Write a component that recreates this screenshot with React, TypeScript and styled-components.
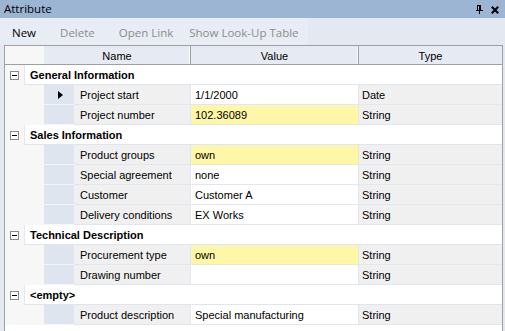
import React from "react";
import styled, { createGlobalStyle } from "styled-components";

const Global = createGlobalStyle`
  html, body { margin: 0; padding: 0; }
  body {
    width: 505px;
    height: 331px;
    overflow: hidden;
    background: #e3e8f1;
    font-family: "Liberation Sans", Arial, sans-serif;
  }
`;

const Panel = styled.div`
  width: 505px;
  height: 331px;
  display: flex;
  flex-direction: column;
  overflow: hidden;
  background: #e3e8f1;
`;

const TitleBar = styled.div`
  height: 18px;
  flex: none;
  display: flex;
  align-items: center;
  background: #9bb5d3;
  padding: 0 6px 0 4px;
  font-family: "Open Sans", "Noto Sans", sans-serif;
  font-size: 11.5px;
  color: #000;
`;

const Title = styled.span`
  flex: 1;
  line-height: 18px;
`;

const TitleIcons = styled.div`
  display: flex;
  align-items: center;
  gap: 8px;
  padding-top: 1px;
`;

const Toolbar = styled.div`
  height: 27px;
  flex: none;
  display: flex;
  align-items: stretch;
`;

const ToolStrip = styled.div`
  width: 308px;
  display: flex;
  align-items: center;
  background: #e8ecf4;
  padding-left: 12px;
  box-sizing: border-box;
`;

const ToolButton = styled.span<{ $disabled?: boolean; $gap?: number }>`
  font-family: "Open Sans", "Noto Sans", sans-serif;
  font-size: 11.5px;
  color: ${(p) => (p.$disabled ? "#8c8c8c" : "#000")};
  margin-left: ${(p) => p.$gap ?? 0}px;
  white-space: nowrap;
  padding-top: 2px;
`;

const Grid = styled.div`
  flex: 1;
  margin: 0 2px 0 4px;
  border: 1px solid #a0a0a0;
  border-bottom: none;
  background: #f7f7f7;
  font-size: 11px;
  color: #000;
  display: flex;
  flex-direction: column;
`;

const HeaderRow = styled.div`
  height: 18px;
  display: flex;
  border-bottom: 1px solid #a0a0a0;
  flex: none;
`;

const HeaderGutter = styled.div`
  width: 39px;
  flex: none;
  background: #f7f7f7;
`;

const HeaderCell = styled.div<{ $w: number; $last?: boolean }>`
  width: ${(p) => p.$w}px;
  flex: ${(p) => (p.$last ? 1 : "none")};
  box-sizing: border-box;
  background: #e6ebf3;
  display: flex;
  align-items: center;
  justify-content: center;
  border-right: ${(p) => (p.$last ? "none" : "1px solid #a0a0a0")};
  box-shadow: ${(p) => (p.$last ? "none" : "inset -1px 0 0 #f6f8fb")};
  line-height: 18px;
  padding-top: 1px;
`;

const GroupRow = styled.div`
  height: 20px;
  display: flex;
  flex: none;
`;

const GroupGutter = styled.div`
  width: 19px;
  flex: none;
  display: flex;
  align-items: center;
  padding-left: 5px;
  box-sizing: border-box;
`;

const MinusBox = styled.div`
  width: 9px;
  height: 9px;
  box-sizing: border-box;
  border: 1px solid #8a8a8a;
  background: #fff;
  display: flex;
  align-items: center;
  justify-content: center;
  &::after {
    content: "";
    width: 5px;
    height: 1px;
    background: #000;
  }
`;

const GroupBand = styled.div`
  flex: 1;
  background: #fff;
  border-left: 1px solid #e3e8f0;
  border-bottom: 1px solid #dfe5ee;
  display: flex;
  align-items: center;
  padding-left: 5px;
  font-weight: bold;
`;

const DataRow = styled.div`
  height: 20px;
  display: flex;
  flex: none;
`;

const RowGutter = styled.div`
  width: 39px;
  flex: none;
`;

const RowHeader = styled.div`
  width: 30px;
  flex: none;
  box-sizing: border-box;
  background: #dfe5ee;
  border-bottom: 1px solid #f4f6f9;
  display: flex;
  align-items: center;
  justify-content: center;
`;

const Arrow = styled.div`
  width: 0;
  height: 0;
  border-top: 4px solid transparent;
  border-bottom: 4px solid transparent;
  border-left: 5px solid #000;
  margin-left: 2px;
`;

const Cell = styled.div<{ $w?: number; $bg: string; $pad: number; $last?: boolean }>`
  width: ${(p) => (p.$w ? `${p.$w}px` : "auto")};
  flex: ${(p) => (p.$last ? 1 : "none")};
  box-sizing: border-box;
  background: ${(p) => p.$bg};
  border-right: ${(p) => (p.$last ? "none" : "1px solid #e1e7ef")};
  border-bottom: 1px solid #e1e7ef;
  padding-left: ${(p) => p.$pad}px;
  display: flex;
  align-items: center;
  white-space: nowrap;
  overflow: hidden;
`;

const Filler = styled.div`
  flex: 1;
  background: #fff;
`;

type Row = { name: string; value: string; type: string; highlight?: boolean; current?: boolean };
type Group = { title: string; rows: Row[] };

const groups: Group[] = [
  {
    title: "General Information",
    rows: [
      { name: "Project start", value: "1/1/2000", type: "Date", current: true },
      { name: "Project number", value: "102.36089", type: "String", highlight: true },
    ],
  },
  {
    title: "Sales Information",
    rows: [
      { name: "Product groups", value: "own", type: "String", highlight: true },
      { name: "Special agreement", value: "none", type: "String" },
      { name: "Customer", value: "Customer A", type: "String" },
      { name: "Delivery conditions", value: "EX Works", type: "String" },
    ],
  },
  {
    title: "Technical Description",
    rows: [
      { name: "Procurement type", value: "own", type: "String", highlight: true },
      { name: "Drawing number", value: "", type: "String" },
    ],
  },
  {
    title: "<empty>",
    rows: [{ name: "Product description", value: "Special manufacturing", type: "String" }],
  },
];

const PinIcon = () => (
  <svg width="7" height="9" viewBox="0 0 7 9" shapeRendering="crispEdges">
    <rect x="1.5" y="0.5" width="3" height="5" fill="none" stroke="#000" />
    <rect x="3" y="0" width="2" height="6" fill="#000" />
    <rect x="0" y="5" width="7" height="1" fill="#000" />
    <rect x="3" y="6" width="1" height="3" fill="#000" />
  </svg>
);

const CloseIcon = () => (
  <svg width="8" height="8" viewBox="0 0 8 8">
    <path d="M0.8 0.8 L7.2 7.2 M7.2 0.8 L0.8 7.2" stroke="#000" strokeWidth="2" />
  </svg>
);

export default function App() {
  return (
    <>
      <Global />
      <Panel>
        <TitleBar>
          <Title>Attribute</Title>
          <TitleIcons>
            <PinIcon />
            <CloseIcon />
          </TitleIcons>
        </TitleBar>
        <Toolbar>
          <ToolStrip>
            <ToolButton>New</ToolButton>
            <ToolButton $disabled $gap={24}>Delete</ToolButton>
            <ToolButton $disabled $gap={24}>Open Link</ToolButton>
            <ToolButton $disabled $gap={16}>Show Look-Up Table</ToolButton>
          </ToolStrip>
        </Toolbar>
        <Grid>
          <HeaderRow>
            <HeaderGutter />
            <HeaderCell $w={147}>Name</HeaderCell>
            <HeaderCell $w={168}>Value</HeaderCell>
            <HeaderCell $w={143} $last>Type</HeaderCell>
          </HeaderRow>
          {groups.map((g) => (
            <React.Fragment key={g.title}>
              <GroupRow>
                <GroupGutter>
                  <MinusBox />
                </GroupGutter>
                <GroupBand>{g.title}</GroupBand>
              </GroupRow>
              {g.rows.map((r) => (
                <DataRow key={r.name}>
                  <RowGutter />
                  <RowHeader>{r.current && <Arrow />}</RowHeader>
                  <Cell $w={117} $bg="#f0f0f0" $pad={6}>{r.name}</Cell>
                  <Cell $w={168} $bg={r.highlight ? "#fff7a8" : "#ffffff"} $pad={4}>{r.value}</Cell>
                  <Cell $bg="#f0f0f0" $pad={3} $last>{r.type}</Cell>
                </DataRow>
              ))}
            </React.Fragment>
          ))}
          <Filler />
        </Grid>
      </Panel>
    </>
  );
}
